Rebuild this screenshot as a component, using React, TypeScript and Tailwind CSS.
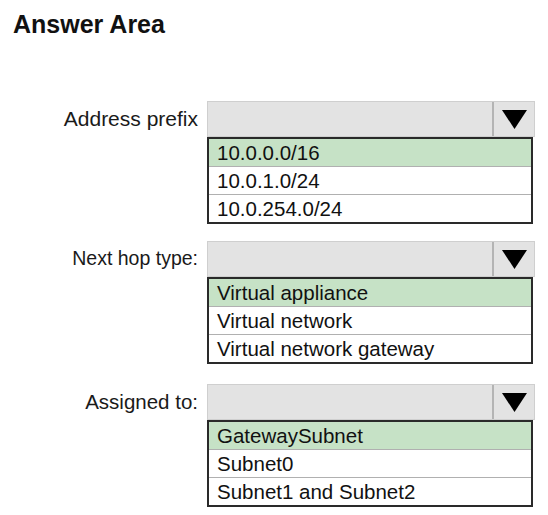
const groups = [
  { label: "Address prefix", size: "text-[21px]", gap: "mt-0", options: ["10.0.0.0/16", "10.0.1.0/24", "10.0.254.0/24"] },
  { label: "Next hop type:", size: "text-[19.5px]", gap: "mt-[17px]", options: ["Virtual appliance", "Virtual network", "Virtual network gateway"] },
  { label: "Assigned to:", size: "text-[20.5px]", gap: "mt-[20px]", options: ["GatewaySubnet", "Subnet0", "Subnet1 and Subnet2"] },
];

function Dropdown({ label, size, options }: { label: string; size: string; options: string[] }) {
  return (
    <div className="flex">
      <div className={`w-[207px] pr-[9px] h-[36px] flex items-center justify-end text-[#1a1a1a] ${size}`}>
        {label}
      </div>
      <div className="w-[328px]">
        <div className="h-[36px] flex bg-[#e3e3e3] border border-[#cfcfcf]">
          <div className="flex-1" />
          <div className="w-[42px] border-l-2 border-[#b4b4b4] flex items-center justify-center">
            <svg width="25" height="19" viewBox="0 0 25 19">
              <polygon points="0,0 25,0 12.5,19" fill="#000" />
            </svg>
          </div>
        </div>
        <div className="w-[326px] border-2 border-[#2a2a2a] text-[20.5px] text-[#111]">
          {options.map((o, i) => (
            <div
              key={o}
              className={
                i === 0
                  ? "h-[27px] leading-[27px] pl-[8px] bg-[#c6e2c6]"
                  : "h-[28px] leading-[27px] pl-[8px] bg-white border-t border-[#b0b0b0]"
              }
            >
              {o}
            </div>
          ))}
        </div>
      </div>
    </div>
  );
}

export default function App() {
  return (
    <div className="w-[548px] h-[515px] bg-white" style={{ fontFamily: '"Liberation Sans", Arial, sans-serif' }}>
      <h1 className="pt-[10px] pl-[13px] text-[25px] font-bold text-[#111] leading-[28px]">Answer Area</h1>
      <div className="mt-[63px] flex flex-col">
        {groups.map((g) => (
          <div key={g.label} className={g.gap}>
            <Dropdown label={g.label} size={g.size} options={g.options} />
          </div>
        ))}
      </div>
    </div>
  );
}
